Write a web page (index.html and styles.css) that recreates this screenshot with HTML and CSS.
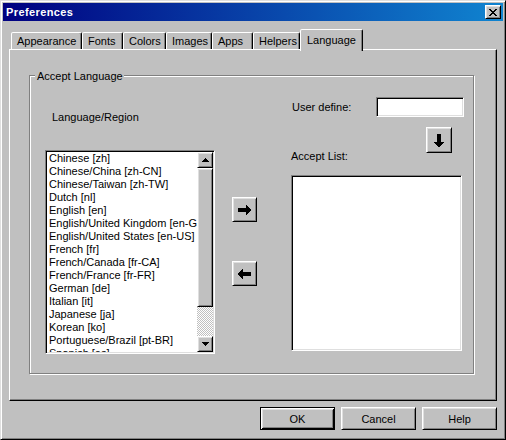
FILE: index.html
```html
<!DOCTYPE html>
<html>
<head>
<meta charset="utf-8">
<link rel="stylesheet" href="styles.css">
</head>
<body>
<div class="window">
  <div class="titlebar">
    <span class="title">Preferences</span>
    <button class="close raised" aria-label="Close">
      <svg width="8" height="7" viewBox="0 0 8 7" shape-rendering="crispEdges"><path d="M0 0h2v1H0zM6 0h2v1H6zM1 1h2v1H1zM5 1h2v1H5zM2 2h4v1H2zM3 3h2v1H3zM2 4h4v1H2zM1 5h2v1H1zM5 5h2v1H5zM0 6h2v1H0zM6 6h2v1H6z" fill="#000"/></svg>
    </button>
  </div>

  <div class="tabs">
    <div class="tab t-appearance">Appearance</div>
    <div class="tab t-fonts">Fonts</div>
    <div class="tab t-colors">Colors</div>
    <div class="tab t-images">Images</div>
    <div class="tab t-apps">Apps</div>
    <div class="tab t-helpers">Helpers</div>
    <div class="tab tab-active t-language">Language</div>
  </div>

  <div class="panel">
    <div class="groupbox">
      <div class="legend">Accept Language</div>
      <div class="gb-body">
        <div class="col-left">
          <div class="lbl-region">Language/Region</div>
          <div class="listbox sunken">
            <ul class="items">
              <li>Chinese [zh]</li>
              <li>Chinese/China [zh-CN]</li>
              <li>Chinese/Taiwan [zh-TW]</li>
              <li>Dutch [nl]</li>
              <li>English [en]</li>
              <li>English/United Kingdom [en-GB]</li>
              <li>English/United States [en-US]</li>
              <li>French [fr]</li>
              <li>French/Canada [fr-CA]</li>
              <li>French/France [fr-FR]</li>
              <li>German [de]</li>
              <li>Italian [it]</li>
              <li>Japanese [ja]</li>
              <li>Korean [ko]</li>
              <li>Portuguese/Brazil [pt-BR]</li>
              <li>Spanish [es]</li>
            </ul>
            <div class="scrollbar">
              <div class="sb-btn raised">
                <svg width="7" height="4" viewBox="0 0 7 4" shape-rendering="crispEdges"><path d="M3 0h1v1H3zM2 1h3v1H2zM1 2h5v1H1zM0 3h7v1H0z" fill="#000"/></svg>
              </div>
              <div class="sb-thumb raised"></div>
              <div class="sb-track"></div>
              <div class="sb-btn raised">
                <svg width="7" height="4" viewBox="0 0 7 4" shape-rendering="crispEdges"><path d="M0 0h7v1H0zM1 1h5v1H1zM2 2h3v1H2zM3 3h1v1H3z" fill="#000"/></svg>
              </div>
            </div>
          </div>
        </div>

        <div class="col-mid">
          <button class="arrow-btn btn-add raised" aria-label="Add">
            <svg width="13" height="10" viewBox="0 0 13 10" shape-rendering="crispEdges"><path d="M0 3h8v4H0zM8 0h1v10H8zM9 1h1v8H9zM10 2h1v6h-1zM11 3h1v4h-1zM12 4h1v2h-1z" fill="#000"/></svg>
          </button>
          <button class="arrow-btn btn-remove raised" aria-label="Remove">
            <svg width="13" height="10" viewBox="0 0 13 10" shape-rendering="crispEdges"><path d="M5 3h8v4H5zM4 0h1v10H4zM3 1h1v8H3zM2 2h1v6H2zM1 3h1v4H1zM0 4h1v2H0z" fill="#000"/></svg>
          </button>
        </div>

        <div class="col-right">
          <div class="ud-row">
            <span class="ud-label">User define:</span>
            <div class="ud-input sunken"></div>
          </div>
          <button class="down-btn raised" aria-label="Add user defined">
            <svg width="10" height="13" viewBox="0 0 10 13" shape-rendering="crispEdges"><path d="M3 0h4v8H3zM0 8h10v1H0zM1 9h8v1H1zM2 10h6v1H2zM3 11h4v1H3zM4 12h2v1H4z" fill="#000"/></svg>
          </button>
          <div class="al-label">Accept List:</div>
          <div class="accept-box sunken"></div>
        </div>
      </div>
    </div>
  </div>

  <div class="footer">
    <button class="btn btn-default">OK</button>
    <button class="btn raised">Cancel</button>
    <button class="btn raised">Help</button>
  </div>
</div>
</body>
</html>
```

FILE: styles.css
```css
* {
  box-sizing: border-box;
}

body {
  margin: 0;
  background: #c0c0c0;
  font: 11px "Liberation Sans", Arial, sans-serif;
  color: #000;
}

button {
  font: inherit;
  color: #000;
  margin: 0;
  padding: 0;
  cursor: default;
}

.raised {
  background: #c0c0c0;
  border: 1px solid;
  border-color: #fff #000 #000 #fff;
  box-shadow: inset 1px 1px #dfdfdf, inset -1px -1px #808080;
}

.sunken {
  background: #fff;
  border: 1px solid;
  border-color: #808080 #fff #fff #808080;
  box-shadow: inset 1px 1px #000, inset -1px -1px #dfdfdf;
  padding: 1px;
}

.window {
  width: 506px;
  height: 440px;
  background: #c0c0c0;
  border: 1px solid;
  border-color: #dfdfdf #000 #000 #dfdfdf;
  box-shadow: inset 1px 1px #fff, inset -1px -1px #808080;
  padding: 2px;
  display: flex;
  flex-direction: column;
}

/* title bar */
.titlebar {
  height: 18px;
  display: flex;
  align-items: center;
  padding: 0 2px 0 3px;
  background: linear-gradient(to right, #000080, #1084d0);
}

.title {
  color: #fff;
  font-weight: bold;
  line-height: 18px;
  letter-spacing: 0.4px;
}

.close {
  margin-left: auto;
  width: 16px;
  height: 14px;
  display: flex;
  align-items: center;
  justify-content: center;
}

/* tabs */
.tabs {
  display: flex;
  align-items: flex-end;
  height: 20px;
  margin-top: 8px;
  padding-left: 8px;
}

.tab {
  height: 17px;
  border: 1px solid;
  border-bottom: 0;
  border-color: #fff #000 transparent #fff;
  border-radius: 2px 2px 0 0;
  box-shadow: inset -1px 0 #808080;
  padding-left: 5px;
  display: flex;
  align-items: center;
  background: #c0c0c0;
  white-space: nowrap;
}

.t-appearance { width: 71px; }
.t-fonts { width: 41px; }
.t-colors { width: 43px; }
.t-images { width: 46px; }
.t-apps { width: 41px; }
.t-helpers { width: 47px; }
.t-language { width: 63px; }

.tab-active {
  height: 22px;
  margin-bottom: -2px;
  padding-left: 6px;
  padding-bottom: 2px;
  position: relative;
  z-index: 1;
}

/* panel */
.panel {
  margin: 0 6px;
  height: 352px;
  border: 1px solid;
  border-color: #fff #000 #000 #fff;
  box-shadow: inset -1px -1px #808080;
  padding: 25px 0 0 19px;
}

.groupbox {
  width: 445px;
  height: 299px;
  border: 1px solid #808080;
  box-shadow: inset 1px 1px #fff, 1px 1px #fff;
}

.legend {
  width: fit-content;
  margin: -6px 0 0 5px;
  padding: 0 1px 0 2px;
  line-height: 13px;
  background: #c0c0c0;
}

.gb-body {
  display: flex;
  align-items: flex-start;
  padding-left: 15px;
}

/* left column */
.col-left {
  width: 170px;
}

.lbl-region {
  margin-top: 28px;
  padding-left: 7px;
  line-height: 13px;
}

.listbox {
  margin-top: 26px;
  width: 170px;
  height: 204px;
  display: flex;
}

.items {
  flex: 1;
  min-width: 0;
  list-style: none;
  margin: 0;
  padding: 0 0 0 2px;
  overflow: hidden;
  white-space: nowrap;
  line-height: 13px;
}

.scrollbar {
  width: 16px;
  display: flex;
  flex-direction: column;
}

.sb-btn {
  height: 16px;
  display: flex;
  align-items: center;
  justify-content: center;
}

.sb-thumb {
  height: 139px;
}

.sb-track {
  flex: 1;
  background: repeating-conic-gradient(#fff 0 25%, #c0c0c0 0 50%) 0 0 / 2px 2px;
}

/* middle column */
.col-mid {
  width: 25px;
  margin-left: 17px;
  display: flex;
  flex-direction: column;
}

.arrow-btn {
  width: 25px;
  height: 25px;
  display: flex;
  align-items: center;
  justify-content: center;
}

.btn-add {
  margin-top: 114px;
}

.btn-remove {
  margin-top: 39px;
}

/* right column */
.col-right {
  width: 173px;
  margin-left: 34px;
  display: flex;
  flex-direction: column;
}

.ud-row {
  margin-top: 14px;
  height: 20px;
  display: flex;
  align-items: center;
}

.ud-label {
  padding-left: 1px;
}

.ud-input {
  margin-left: auto;
  width: 88px;
  height: 20px;
}

.down-btn {
  margin: 10px 0 0 135px;
  width: 26px;
  height: 26px;
  display: flex;
  align-items: center;
  justify-content: center;
}

.al-label {
  margin-top: -3px;
  line-height: 13px;
}

.accept-box {
  margin-top: 12px;
  width: 171px;
  height: 176px;
}

/* footer */
.footer {
  display: flex;
  justify-content: flex-end;
  gap: 6px;
  margin: 6px 6px 0 0;
}

.btn {
  width: 75px;
  height: 23px;
  display: flex;
  align-items: center;
  justify-content: center;
}

.btn-default {
  background: #c0c0c0;
  border: 1px solid #000;
  box-shadow: inset 1px 1px #fff, inset -1px -1px #000, inset 2px 2px #dfdfdf, inset -2px -2px #808080;
}
```
